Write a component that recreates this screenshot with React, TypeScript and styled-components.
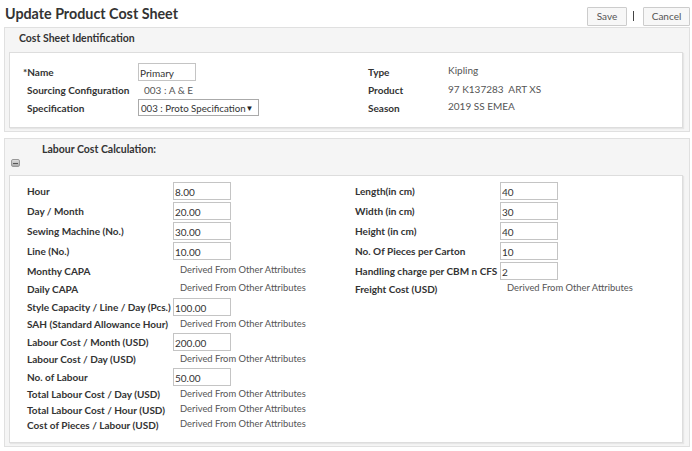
import styled, { createGlobalStyle } from "styled-components";

const GlobalStyle = createGlobalStyle`
  body {
    margin: 0;
    background: #fff;
    font-family: Lato, "Liberation Sans", sans-serif;
    color: #333;
  }
`;

const Page = styled.div`
  width: 692px;
  padding: 0 2px 0 4px;
  box-sizing: border-box;
`;

const TopBar = styled.div`
  display: flex;
  align-items: center;
  justify-content: space-between;
  height: 27px;
`;

const Title = styled.h1`
  margin: 0 0 0 1px;
  font-size: 14.3px;
  font-weight: 700;
  color: #333;
`;

const Actions = styled.div`
  display: flex;
  align-items: center;
  gap: 4px;
  padding-top: 5px;
`;

const Button = styled.button<{ $w: number }>`
  width: ${(p) => p.$w}px;
  height: 19px;
  padding: 0;
  border: 1px solid #ccc;
  background: #f7f7f7;
  color: #555;
  font-family: inherit;
  font-size: 10px;
  border-radius: 1px;
`;

const Divider = styled.span`
  width: 1px;
  height: 10px;
  background: #444;
  margin: 0 5px 0 2px;
`;

const Panel = styled.section`
  background: #f5f5f5;
  border: 1px solid #e0e0e0;
  padding: 0 6px 3px 4px;
  margin-bottom: 6px;
`;

const PanelHeader = styled.div`
  height: 24px;
  display: flex;
  align-items: center;
  padding: 0 0 5px 10px;
  box-sizing: border-box;
  font-size: 10.5px;
  font-weight: 700;
  color: #333;
`;

const SubHeader = styled.div`
  padding: 4px 0 0 33px;
  height: 14px;
  font-size: 10.5px;
  font-weight: 700;
  color: #333;
`;

const Toggle = styled.div`
  width: 7px;
  height: 6px;
  margin: 2px 0 8px 2px;
  border: 1px solid #999;
  border-radius: 2px;
  background: linear-gradient(#ddd, #aaa);
  display: flex;
  align-items: center;
  justify-content: center;
  &::after {
    content: "";
    width: 5px;
    height: 1px;
    background: #555;
  }
`;

const Box = styled.div<{ $pad: string }>`
  background: #fff;
  border: 1px solid #ddd;
  box-shadow: 1px 1px 1px #e6e6e6;
  padding: ${(p) => p.$pad};
`;

const Columns = styled.div<{ $split: number }>`
  display: grid;
  grid-template-columns: ${(p) => p.$split}px 1fr;
`;

const Row = styled.div<{ $h: number; $label: number }>`
  display: grid;
  grid-template-columns: ${(p) => p.$label}px 1fr;
  align-items: center;
  height: ${(p) => p.$h}px;
`;

const Label = styled.span`
  font-size: 10px;
  font-weight: 700;
  color: #333;
  white-space: nowrap;
`;

const Star = styled.span`
  margin-left: -4px;
`;

const Value = styled.span<{ $indent?: number; $lift?: number; $size?: number }>`
  font-size: ${(p) => p.$size ?? 10}px;
  color: #555;
  white-space: nowrap;
  padding-left: ${(p) => p.$indent ?? 0}px;
  position: relative;
  top: -${(p) => p.$lift ?? 0}px;
`;

const Input = styled.input`
  box-sizing: border-box;
  width: 58px;
  height: 18px;
  padding: 2px 1px 0;
  border: 1px solid #c4c4c4;
  font-family: inherit;
  font-size: 10px;
  color: #333;
  outline: none;
`;

const Select = styled.div`
  box-sizing: border-box;
  width: 121px;
  height: 17px;
  border: 1px solid #aaa;
  display: flex;
  align-items: center;
  justify-content: space-between;
  padding: 0 5px 0 2px;
  font-size: 9.7px;
  color: #333;
  white-space: nowrap;
`;

const Arrow = styled.span`
  font-size: 8px;
  color: #222;
`;

type Field = { label: string; h: number; input?: string };

const DERIVED = "Derived From Other Attributes";

const leftFields: Field[] = [
  { label: "Hour", h: 20, input: "8.00" },
  { label: "Day / Month", h: 20, input: "20.00" },
  { label: "Sewing Machine (No.)", h: 20, input: "30.00" },
  { label: "Line (No.)", h: 20, input: "10.00" },
  { label: "Monthy CAPA", h: 19 },
  { label: "Daily CAPA", h: 17 },
  { label: "Style Capacity / Line / Day (Pcs.)", h: 19, input: "100.00" },
  { label: "SAH (Standard Allowance Hour)", h: 16 },
  { label: "Labour Cost / Month (USD)", h: 19, input: "200.00" },
  { label: "Labour Cost / Day (USD)", h: 16 },
  { label: "No. of Labour", h: 19, input: "50.00" },
  { label: "Total Labour Cost / Day (USD)", h: 16 },
  { label: "Total Labour Cost / Hour (USD)", h: 15 },
  { label: "Cost of Pieces / Labour (USD)", h: 15 },
];

const rightFields: Field[] = [
  { label: "Length(in cm)", h: 20, input: "40" },
  { label: "Width (in cm)", h: 20, input: "30" },
  { label: "Height (in cm)", h: 20, input: "40" },
  { label: "No. Of Pieces per Carton", h: 20, input: "10" },
  { label: "Handling charge per CBM n CFS", h: 19, input: "2" },
  { label: "Freight Cost (USD)", h: 17 },
];

function FieldRow({ f, label }: { f: Field; label: number }) {
  return (
    <Row $h={f.h} $label={label}>
      <Label>{f.label}</Label>
      {f.input ? (
        <Input defaultValue={f.input} />
      ) : (
        <Value $indent={7} $lift={1} $size={9.4}>
          {DERIVED}
        </Value>
      )}
    </Row>
  );
}

export default function App() {
  return (
    <Page>
      <GlobalStyle />
      <TopBar>
        <Title>Update Product Cost Sheet</Title>
        <Actions>
          <Button $w={40}>Save</Button>
          <Divider />
          <Button $w={47}>Cancel</Button>
        </Actions>
      </TopBar>

      <Panel>
        <PanelHeader>Cost Sheet Identification</PanelHeader>
        <Box $pad="9px 0 11px 17px">
          <Columns $split={341}>
            <div>
              <Row $h={19} $label={111}>
                <Label>
                  <Star>*</Star>Name
                </Label>
                <Input defaultValue="Primary" />
              </Row>
              <Row $h={18} $label={111}>
                <Label>Sourcing Configuration</Label>
                <Value $indent={6}>003 : A &amp; E</Value>
              </Row>
              <Row $h={17} $label={111}>
                <Label>Specification</Label>
                <Select>
                  003 : Proto Specification <Arrow>▼</Arrow>
                </Select>
              </Row>
            </div>
            <div>
              <Row $h={19} $label={80}>
                <Label>Type</Label>
                <Value $lift={2}>Kipling</Value>
              </Row>
              <Row $h={18} $label={80}>
                <Label>Product</Label>
                <Value $lift={1}>97 K137283&nbsp; ART XS</Value>
              </Row>
              <Row $h={17} $label={80}>
                <Label>Season</Label>
                <Value $lift={2}>2019 SS EMEA</Value>
              </Row>
            </div>
          </Columns>
        </Box>
      </Panel>

      <Panel>
        <SubHeader>Labour Cost Calculation:</SubHeader>
        <Toggle />
        <Box $pad="5px 0 10px 17px">
          <Columns $split={328}>
            <div>
              {leftFields.map((f) => (
                <FieldRow key={f.label} f={f} label={146} />
              ))}
            </div>
            <div>
              {rightFields.map((f) => (
                <FieldRow key={f.label} f={f} label={145} />
              ))}
            </div>
          </Columns>
        </Box>
      </Panel>
    </Page>
  );
}
